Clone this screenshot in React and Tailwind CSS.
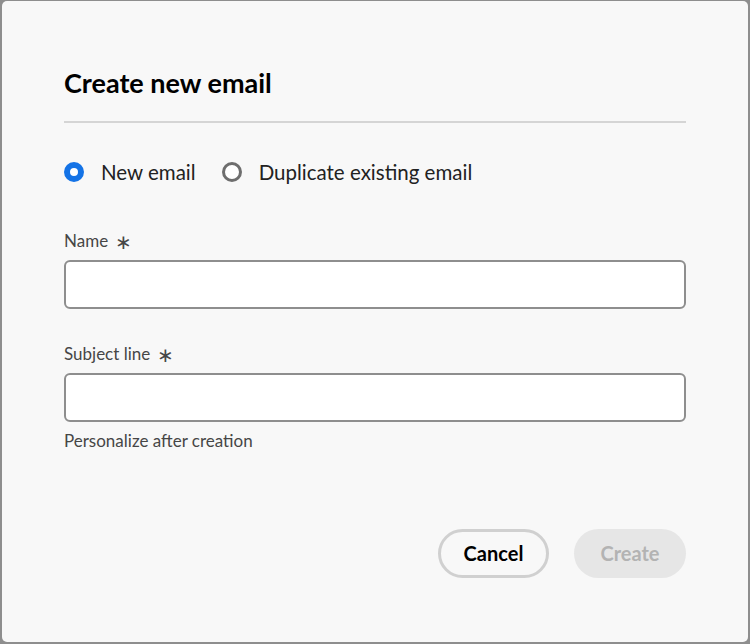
export default function App() {
  return (
    <div
      className="w-[750px] h-[644px] bg-[#8e8e8e] p-[2px] pt-[1px]"
      style={{ fontFamily: 'Lato, "Open Sans", sans-serif' }}
    >
      <div className="w-full h-full bg-[#f8f8f8] rounded-[5px] px-[62px] pt-[66px] flex flex-col text-[#222]">
        <h2 className="text-[27px] font-bold leading-[32px] text-black">Create new email</h2>
        <div className="h-[2px] bg-[#d5d5d5] mt-[22px]" />

        <div className="flex items-center mt-[37px] h-[24px]">
          <label className="flex items-center">
            <span className="w-[20px] h-[20px] rounded-full border-[6px] border-[#1473e6] bg-white" />
            <span className="ml-[17px] text-[20.5px]">New email</span>
          </label>
          <label className="flex items-center ml-[26px]">
            <span className="w-[20px] h-[20px] rounded-full border-[3px] border-[#6e6e6e] bg-white" />
            <span className="ml-[17px] text-[20.5px]">Duplicate existing email</span>
          </label>
        </div>

        <div className="mt-[46px]">
          <div className="flex items-center h-[22px] text-[17px] text-[#464646]">
            Name <span className="ml-[7px] text-[20px] leading-none">∗</span>
          </div>
          <input
            type="text"
            className="mt-[8px] w-full h-[49px] bg-white border-2 border-[#8e8e8e] rounded-[6px] outline-none"
          />
        </div>

        <div className="mt-[34px]">
          <div className="flex items-center h-[22px] text-[17px] text-[#464646]">
            Subject line <span className="ml-[7px] text-[20px] leading-none">∗</span>
          </div>
          <input
            type="text"
            className="mt-[8px] w-full h-[49px] bg-white border-2 border-[#8e8e8e] rounded-[6px] outline-none"
          />
          <p className="mt-[6px] text-[17px] text-[#464646]">Personalize after creation</p>
        </div>

        <div className="flex justify-end gap-[25px] mt-[75px]">
          <button
            type="button"
            className="h-[49px] w-[111px] rounded-full border-[3px] border-[#d0d0d0] text-[20px] font-bold text-black"
          >
            Cancel
          </button>
          <button
            type="button"
            disabled
            className="h-[49px] w-[112px] rounded-full bg-[#e6e6e6] text-[20px] font-bold text-[#b3b3b3]"
          >
            Create
          </button>
        </div>
      </div>
    </div>
  )
}
